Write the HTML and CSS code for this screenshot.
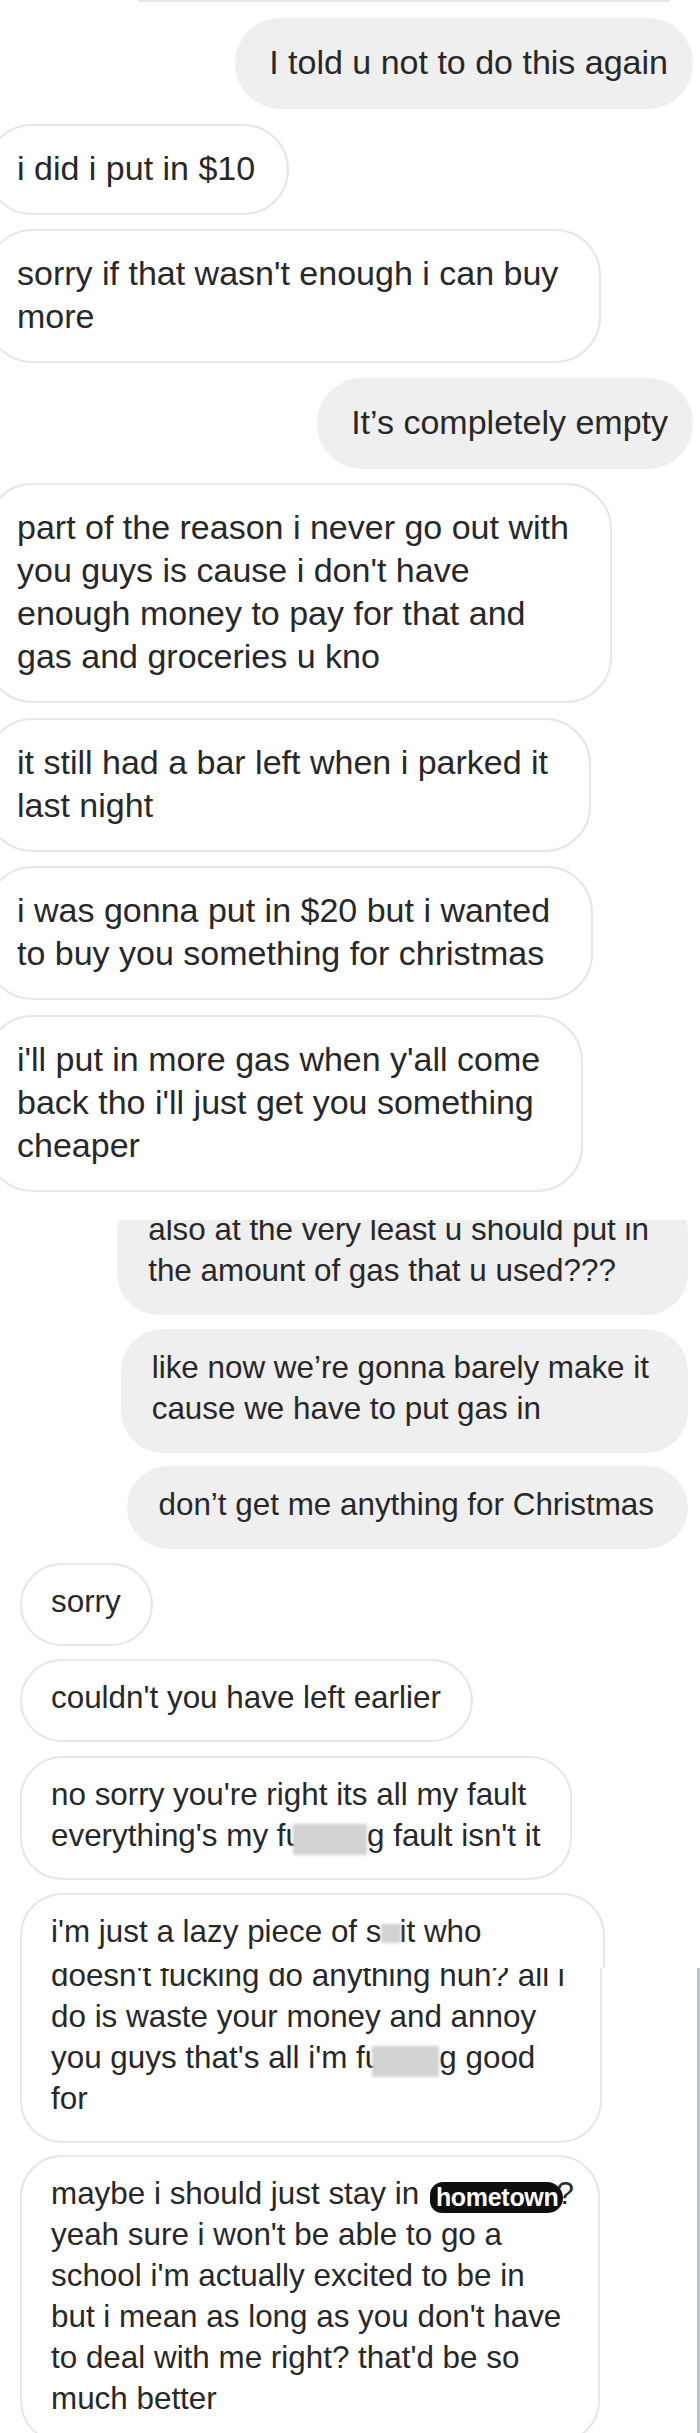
FILE: index.html
```html
<!DOCTYPE html>
<html lang="en">
<head>
<meta charset="utf-8">
<title>Chat</title>
<link rel="stylesheet" href="styles.css">
</head>
<body>
<div class="feed feed-a">
  <div class="prev-edge"></div>
  <div class="msg out">I told u not to do this again</div>
  <div class="msg in">i did i put in $10</div>
  <div class="msg in wrap">sorry if that wasn't enough i can buy<br>more</div>
  <div class="msg out">It’s completely empty</div>
  <div class="msg in wrap">part of the reason i never go out with<br>you guys is cause i don't have<br>enough money to pay for that and<br>gas and groceries u kno</div>
  <div class="msg in wrap">it still had a bar left when i parked it<br>last night</div>
  <div class="msg in wrap">i was gonna put in $20 but i wanted<br>to buy you something for christmas</div>
  <div class="msg in wrap">i'll put in more gas when y'all come<br>back tho i'll just get you something<br>cheaper</div>
</div>
<div class="feed lower feed-b">
  <div class="msg out wrap clipped">also at the very least u should put in<br>the amount of gas that u used???</div>
  <div class="msg out wrap">like now we’re gonna barely make it<br>cause we have to put gas in</div>
  <div class="msg out">don’t get me anything for Christmas</div>
  <div class="msg in">sorry</div>
  <div class="msg in">couldn't you have left earlier</div>
  <div class="msg in">no sorry you're right its all my fault<br>everything's my fu<span class="blur blur-wide"></span>g fault isn't it</div>
  <div class="msg in split-top">i'm just a lazy piece of s<span class="blur blur-small"></span>it who</div>
</div>
<div class="feed lower feed-c">
  <div class="msg in split-bottom">doesn't fucking do anything huh? all i<br>do is waste your money and annoy<br>you guys that's all i'm fu<span class="blur blur-wide2"></span>g good<br>for</div>
  <div class="msg in last">maybe i should just stay in <span class="marker">hometown</span>?<br>yeah sure i won't be able to go a<br>school i'm actually excited to be in<br>but i mean as long as you don't have<br>to deal with me right? that'd be so<br>much better</div>
</div>
</body>
</html>
```
FILE: styles.css
```css
html, body {
  margin: 0;
  padding: 0;
  background: #ffffff;
}

body {
  width: 700px;
  font-family: "Liberation Sans", Arial, Helvetica, sans-serif;
  color: #282828;
  overflow-x: hidden;
}

.feed {
  display: flex;
  flex-direction: column;
  align-items: flex-start;
}

.msg {
  box-sizing: border-box;
  white-space: nowrap;
}

.out {
  align-self: flex-end;
  background: #efefef;
}

.in {
  align-self: flex-start;
  background: #ffffff;
  border: 2px solid #e6e6e6;
}

/* upper part of the screenshot */
.feed-a {
  gap: 14.5px;
}

.prev-edge {
  margin-left: 138px;
  margin-bottom: 1.5px;
  width: 532px;
  height: 2px;
  border-radius: 2px;
  background: #e8e8e8;
}

.feed-a .msg {
  font-size: 34px;
  line-height: 43px;
  border-radius: 46px;
}

.feed-a .out {
  margin-right: 7px;
  padding: 23px 25px 25px 34px;
}

.feed-a .in {
  margin-left: -14px;
  padding: 21px 32px 23px 29px;
}

.feed-a .in.wrap {
  padding-right: 41px;
}

/* lower, spliced parts */
.lower .msg {
  font-size: 31.4px;
  line-height: 41px;
  border-radius: 42px;
}

.lower .out {
  margin-right: 12px;
  padding: 18px 34px 24px 31px;
}

.lower .out.wrap {
  padding-right: 39px;
}

.lower .in {
  margin-left: 20px;
  padding: 16px 30px 22px 29px;
}

.lower .in.last {
  width: 580px;
  padding-right: 20px;
}

.feed-b {
  margin-top: 28.5px;
  overflow: hidden;
  gap: 13.5px;
}

.clipped {
  margin-top: -29px;
}

.split-top {
  width: 585px;
  border-bottom: none;
  border-radius: 42px 42px 0 0 !important;
  padding-bottom: 16px !important;
}

.feed-c {
  box-sizing: border-box;
  overflow: hidden;
  gap: 12px;
  border-right: 3px solid #b6c3d9;
}

.split-bottom {
  width: 582px;
  margin-top: -13px;
  border-top: none !important;
  border-radius: 0 0 42px 42px !important;
  padding-top: 0 !important;
}

.blur {
  display: inline-block;
  background: #d2d2d2;
  filter: blur(1.5px);
}

.blur-wide {
  width: 74px;
  height: 31px;
  margin-left: -10px;
  vertical-align: -9px;
}

.blur-wide2 {
  width: 67px;
  height: 31px;
  margin-left: -10px;
  vertical-align: -9px;
}

.blur-small {
  width: 20px;
  height: 19px;
  margin: 0 -1px;
  vertical-align: -1px;
}

.marker {
  display: inline-block;
  background: #0e0e0e;
  color: #ffffff;
  font-weight: 700;
  font-size: 25px;
  line-height: 31px;
  letter-spacing: -0.3px;
  padding: 0 5px 0 6px;
  margin-left: 2px;
  margin-right: -7px;
  border-radius: 13px 16px 15px 12px;
  vertical-align: -2px;
}
```
